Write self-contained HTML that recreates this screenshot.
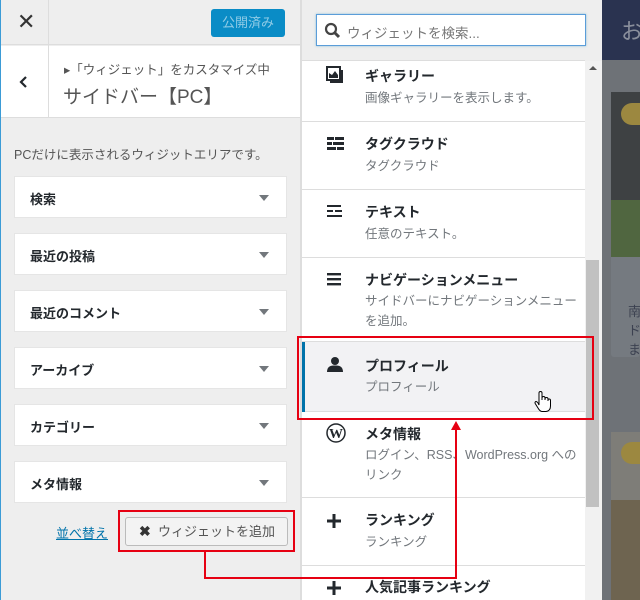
<!DOCTYPE html>
<html><head><meta charset="utf-8"><style>
*{box-sizing:border-box;margin:0;padding:0}
html,body{width:640px;height:600px;overflow:hidden}
body{position:relative;background:#eee;font-family:"Liberation Sans","Noto Sans CJK JP",sans-serif;color:#23282d}
.abs{position:absolute}
.box{position:absolute;left:14px;width:273px;height:42px;background:#fff;border:1px solid #e5e5e5;font-size:13px;font-weight:bold;padding:12px 0 0 15px;color:#23282d}
.box:after{content:"";position:absolute;right:17px;top:18px;border:5px solid transparent;border-top:6px solid #72777c;border-bottom:0}
.item{position:absolute;left:302px;width:283px;background:#fff;border-bottom:1px solid #ddd}
.item .t{position:absolute;left:63px;font-size:14px;font-weight:bold;color:#23282d}
.item .d{position:absolute;left:63px;font-size:12.5px;color:#72777c;line-height:20px;width:215px}
.ic{position:absolute;left:24px}
</style></head><body>
<div class="abs" style="left:0;top:0;width:1px;height:600px;background:#3b9bd6"></div>
<div class="abs" style="left:1px;top:0;width:299px;height:45px;background:#eee;border-bottom:1px solid #ddd"></div>
<div class="abs" style="left:48px;top:0;width:1px;height:118px;background:#ddd"></div>
<div class="abs" style="left:17px;top:9px;font-size:22px;color:#333">✕</div>
<div class="abs" style="left:211px;top:9px;width:74px;height:28px;background:#0a8cc6;border-radius:3px;color:#8fcbe6;font-size:13px;text-align:center;line-height:28px">公開済み</div>
<div class="abs" style="left:1px;top:46px;width:299px;height:72px;background:#fff;border-bottom:1px solid #ddd"></div>
<div class="abs" style="left:48px;top:46px;width:1px;height:72px;background:#ddd"></div>
<svg class="abs" style="left:19px;top:75px" width="10" height="14"><path d="M7 2 L2 7 L7 12" stroke="#23282d" stroke-width="2.2" fill="none"/></svg>
<div class="abs" style="left:64px;top:59px;font-size:12.5px;color:#555">▸「ウィジェット」をカスタマイズ中</div>
<div class="abs" style="left:63px;top:82px;font-size:19px;color:#555">サイドバー【PC】</div>
<div class="abs" style="left:14px;top:144px;font-size:12.5px;color:#555">PCだけに表示されるウィジットエリアです。</div>
<div class="box" style="top:176px">検索</div>
<div class="box" style="top:233px">最近の投稿</div>
<div class="box" style="top:290px">最近のコメント</div>
<div class="box" style="top:347px">アーカイブ</div>
<div class="box" style="top:404px">カテゴリー</div>
<div class="box" style="top:461px">メタ情報</div>
<div class="abs" style="left:56px;top:523px;font-size:13px;color:#0073aa;text-decoration:underline">並べ替え</div>
<div class="abs" style="left:125px;top:517px;width:163px;height:29px;background:#f3f3f3;border:1px solid #bbb;border-radius:3px;font-size:13px;color:#555;line-height:27px;padding-left:13px"><b style="color:#333;font-size:14px">✖</b>&nbsp; ウィジェットを追加</div>

<div class="abs" style="left:300px;top:0;width:2px;height:600px;background:#ddd"></div>
<div class="abs" style="left:316px;top:14px;width:270px;height:32px;background:#fff;border:1px solid #5b9dd9;box-shadow:0 0 2px rgba(30,140,190,.5)"></div>
<svg class="abs" style="left:324px;top:22px" width="17" height="17"><circle cx="7" cy="7" r="5" stroke="#444" stroke-width="2.2" fill="none"/><path d="M10.5 10.5 L15 15" stroke="#444" stroke-width="3"/></svg>
<div class="abs" style="left:347px;top:22px;font-size:13.5px;color:#777">ウィジェットを検索...</div>
<div class="abs" style="left:302px;top:60px;width:283px;height:1px;background:#ddd"></div>
<div class="abs" style="left:585px;top:61px;width:17px;height:539px;background:#f1f1f1"></div>
<div class="abs" style="left:589px;top:66px;border:4px solid transparent;border-bottom:4px solid #555;border-top:0"></div>
<div class="abs" style="left:586px;top:260px;width:13px;height:247px;background:#c1c1c1"></div>

<div class="item" style="top:61px;height:61px"><svg class="ic" style="top:5px" width="18" height="18"><rect x="1" y="1" width="13" height="13" fill="none" stroke="#23282d" stroke-width="2"/><path d="M3 12 L3 7 L6 9 L9 5 L12 9 L12 12Z" fill="#23282d"/><path d="M16 4 V16 H4" fill="none" stroke="#23282d" stroke-width="2"/></svg><div class="t" style="top:5px">ギャラリー</div><div class="d" style="top:27px">画像ギャラリーを表示します。</div></div>
<div class="item" style="top:122px;height:68px"><svg class="ic" style="top:15px" width="19" height="14"><g fill="#23282d"><rect x="1" y="0" width="7" height="3"/><rect x="9" y="0" width="9" height="3"/><rect x="1" y="5" width="5" height="3"/><rect x="7" y="5" width="11" height="3"/><rect x="1" y="10" width="9" height="3"/><rect x="11" y="10" width="7" height="3"/></g></svg><div class="t" style="top:12px">タグクラウド</div><div class="d" style="top:34px">タグクラウド</div></div>
<div class="item" style="top:190px;height:68px"><svg class="ic" style="top:15px" width="18" height="14"><g fill="#23282d"><rect x="1" y="0" width="14" height="2"/><rect x="1" y="5" width="6" height="2"/><rect x="9" y="5" width="7" height="2"/><rect x="1" y="10" width="15" height="2"/></g></svg><div class="t" style="top:12px">テキスト</div><div class="d" style="top:34px">任意のテキスト。</div></div>
<div class="item" style="top:258px;height:84px"><svg class="ic" style="top:15px" width="16" height="14"><g fill="#23282d"><rect x="1" y="0" width="14" height="2.4"/><rect x="1" y="5" width="14" height="2.4"/><rect x="1" y="10" width="14" height="2.4"/></g></svg><div class="t" style="top:12px">ナビゲーションメニュー</div><div class="d" style="top:33px">サイドバーにナビゲーションメニューを追加。</div></div>
<div class="item" style="top:342px;height:70px;background:#f2f2f4"><div class="abs" style="left:0;top:0;width:3px;height:70px;background:#0073aa"></div><svg class="ic" style="top:14px" width="18" height="17"><circle cx="9" cy="5" r="4" fill="#23282d"/><path d="M1 16 Q1 9 9 9.5 Q17 9 17 16Z" fill="#23282d"/></svg><div class="t" style="top:14px">プロフィール</div><div class="d" style="top:35px">プロフィール</div>
<svg class="abs" style="left:232px;top:49px" width="18" height="22"><path d="M5 14 V2 Q5 0.5 6.5 0.5 Q8 0.5 8 2 V9 V7 Q8 5.5 9.5 5.5 Q11 5.5 11 7 V9 V8 Q11 6.5 12.5 6.5 Q14 6.5 14 8 V10 V9 Q14 8 15.2 8 Q16.5 8 16.5 9.5 V15 Q16.5 20 12 20.5 H8 Q6 20.5 4 17 L1.2 12.5 Q0.5 11 2 10.5 Q3.5 10.5 5 14Z" fill="#fff" stroke="#000" stroke-width="1"/></svg></div>
<div class="item" style="top:412px;height:86px"><svg class="ic" style="top:11px" width="20" height="20"><circle cx="10" cy="10" r="9" fill="#fff" stroke="#23282d" stroke-width="1.5"/><text x="10" y="15" font-family="Liberation Serif" font-size="14" font-weight="bold" text-anchor="middle" fill="#23282d">W</text></svg><div class="t" style="top:12px">メタ情報</div><div class="d" style="top:33px">ログイン、RSS、WordPress.org へのリンク</div></div>
<div class="item" style="top:498px;height:68px"><svg class="ic" style="top:15px" width="16" height="16"><path d="M8 1 V15 M1 8 H15" stroke="#23282d" stroke-width="3"/></svg><div class="t" style="top:12px">ランキング</div><div class="d" style="top:34px">ランキング</div></div>
<div class="item" style="top:566px;height:34px;border:0"><svg class="ic" style="top:14px" width="16" height="16"><path d="M8 1 V15 M1 8 H15" stroke="#23282d" stroke-width="3"/></svg><div class="t" style="top:11px">人気記事ランキング</div></div>

<div class="abs" style="left:602px;top:0;width:38px;height:60px;background:#2a3350"></div>
<div class="abs" style="left:621px;top:14px;font-size:22px;color:#8a8f9c">お</div>
<div class="abs" style="left:602px;top:60px;width:38px;height:540px;background:#6e7277"></div>
<div class="abs" style="left:611px;top:92px;width:29px;height:265px;background:#757a80;border-radius:3px"></div>
<div class="abs" style="left:611px;top:92px;width:29px;height:165px;background:#3e4143"></div>
<div class="abs" style="left:611px;top:200px;width:29px;height:57px;background:#506640"></div>
<div class="abs" style="left:621px;top:103px;width:19px;height:22px;background:#9c8840;border-radius:11px 0 0 11px"></div>
<div class="abs" style="left:628px;top:302px;font-size:13px;color:#3c4150;line-height:19px">南<br>ド<br>ま</div>
<div class="abs" style="left:611px;top:432px;width:29px;height:168px;background:#7e7d78"></div>
<div class="abs" style="left:621px;top:442px;width:19px;height:22px;background:#9c8840;border-radius:11px 0 0 11px"></div>
<div class="abs" style="left:611px;top:500px;width:29px;height:100px;background:#6e6450"></div>

<div class="abs" style="left:297px;top:336px;width:297px;height:84px;border:2px solid #e60012"></div>
<div class="abs" style="left:118px;top:510px;width:177px;height:42px;border:2px solid #e60012"></div>
<div class="abs" style="left:204px;top:552px;width:2px;height:27px;background:#e60012"></div>
<div class="abs" style="left:204px;top:577px;width:253px;height:2px;background:#e60012"></div>
<div class="abs" style="left:455px;top:428px;width:2px;height:151px;background:#e60012"></div>
<div class="abs" style="left:451px;top:421px;border:5px solid transparent;border-bottom:9px solid #e60012;border-top:0"></div>
</body></html>
